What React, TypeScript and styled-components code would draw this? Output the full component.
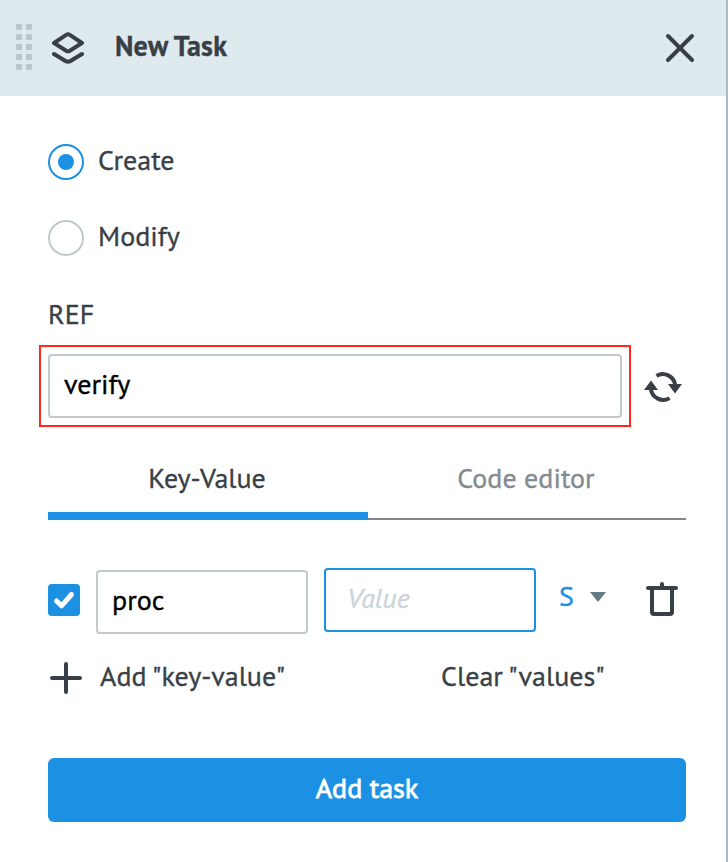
import React from "react";
import styled, { createGlobalStyle } from "styled-components";

const ink = "#393f47";
const blue = "#1c91e3";

const GlobalStyle = createGlobalStyle`
  * { box-sizing: border-box; }
  body { margin: 0; background: #fff; }
`;

const Panel = styled.main`
  width: 728px;
  height: 862px;
  border-right: 2px solid #acbcc4;
  background: #fff;
  color: ${ink};
  font-family: "PT Sans", "Open Sans", sans-serif;
  font-size: 28px;
  font-stretch: 84%;
  line-height: 36px;
  -webkit-text-stroke: 0.35px currentColor;
`;

const Header = styled.header`
  display: flex;
  align-items: center;
  height: 96px;
  padding: 0 30px 0 16px;
  background: #dfeaef;
`;

const Grip = styled.div`
  display: grid;
  grid-template-columns: 6px 6px;
  grid-auto-rows: 6px;
  gap: 4px;
  margin: 0 20px 2px 0;
`;

const GripDot = styled.i`
  border-radius: 1px;
  background: #b9c6cb;
`;

const Text = styled.span`
  white-space: nowrap;
`;

const Title = styled.h1`
  flex: 1;
  margin: 0 0 4px 31px;
  font-size: 28px;
  font-weight: 700;
  letter-spacing: 0.2px;
`;

const Icon = styled.svg`
  display: block;
  flex: none;
  fill: none;
  stroke: ${ink};
  stroke-linecap: round;
  stroke-linejoin: round;
`;

const Body = styled.section`
  padding: 48px 40px 0 48px;
`;

const Option = styled.label`
  display: flex;
  height: 36px;
  gap: 14px;
  margin-bottom: 40px;
`;

const OptionText = styled.span`
  margin-top: -2px;
`;

const Radio = styled.span<{ $on?: boolean }>`
  display: grid;
  place-items: center;
  width: 36px;
  height: 36px;
  border: 2px solid ${(p) => (p.$on ? blue : "#c1c9cd")};
  border-radius: 50%;
  &::after {
    content: "";
    width: 16px;
    height: 16px;
    border-radius: 50%;
    background: ${(p) => (p.$on ? blue : "transparent")};
  }
`;

const FieldLabel = styled.div`
  height: 36px;
`;

const RefRow = styled.div`
  display: flex;
  align-items: center;
  gap: 13px;
  margin: 13px -10px 0 -9px;
`;

const Highlight = styled.div`
  width: 592px;
  padding: 7px;
  border: 2px solid #ff2a1c;
`;

const Field = styled.div<{ $active?: boolean }>`
  height: 64px;
  padding: ${(p) => (p.$active ? "10px 21px" : "10px 14px")};
  border: 2px solid ${(p) => (p.$active ? blue : "#c1c9cd")};
  border-radius: 4px;
  background: #fff;
  color: ${(p) => (p.$active ? "#cbd4db" : "#000")};
  font-style: ${(p) => (p.$active ? "italic" : "normal")};
`;

const Tabs = styled.nav`
  display: grid;
  grid-template-columns: 320px 1fr;
  height: 60px;
  margin-top: 33px;
`;

const Tab = styled.div<{ $on?: boolean }>`
  padding-right: 2px;
  border-bottom: ${(p) => (p.$on ? `8px solid ${blue}` : "2px solid #7b8791")};
  color: ${(p) => (p.$on ? ink : "#838a90")};
  text-align: center;
`;

const PairRow = styled.div`
  display: grid;
  grid-template-columns: 32px 212px 212px 46px 32px;
  column-gap: 16px;
  height: 66px;
  margin-top: 48px;
`;

const Checkbox = styled.span`
  display: grid;
  place-items: center;
  width: 32px;
  height: 32px;
  margin-top: 16px;
  border-radius: 4px;
  background: ${blue};
`;

const KeyField = styled(Field)`
  margin-top: 2px;
`;

const TypeSelect = styled.div`
  display: flex;
  justify-content: space-between;
  width: 47px;
  margin: 10px 0 0 7px;
  color: ${blue};
`;

const Caret = styled.svg`
  width: 16px;
  height: 10px;
  margin-top: 14px;
  fill: #667a84;
`;

const Trash = styled(Icon)`
  margin: 12px 0 0 32px;
`;

const Actions = styled.div`
  display: grid;
  grid-template-columns: 52px 341px 1fr;
  height: 36px;
  margin-top: 24px;
`;

const Plus = styled(Icon)`
  margin: 4px 0 0 2px;
`;

const Submit = styled.button`
  display: block;
  width: 100%;
  height: 64px;
  margin-top: 64px;
  padding: 0 0 5px;
  border: 0;
  border-radius: 6px;
  background: ${blue};
  color: #fff;
  font: inherit;
  -webkit-text-stroke: 0.8px #fff;
`;

export default function App() {
  return (
    <Panel>
      <GlobalStyle />
      <Header>
        <Grip>
          {Array.from({ length: 10 }, (_, i) => (
            <GripDot key={i} />
          ))}
        </Grip>
        <Icon width="32" height="32" viewBox="0 0 32 32" strokeWidth="4">
          <path d="M14.2 2.8Q16 1.6 17.8 2.8L30 11L17.8 18.7Q16 19.8 14.2 18.7L2 11Z" />
          <path d="M2 22L13.5 29Q16 30.5 18.5 29L30 22" />
        </Icon>
        <Title>New Task</Title>
        <Icon width="32" height="32" viewBox="0 0 32 32" strokeWidth="4">
          <path d="M4 4L28 28M28 4L4 28" />
        </Icon>
      </Header>
      <Body>
        <Option>
          <Radio $on />
          <OptionText>Create</OptionText>
        </Option>
        <Option>
          <Radio />
          <OptionText>Modify</OptionText>
        </Option>
        <FieldLabel>REF</FieldLabel>
        <RefRow>
          <Highlight>
            <Field>verify</Field>
          </Highlight>
          <Icon width="38" height="32" viewBox="0 0 38 32" strokeWidth="4">
            <path
              strokeLinecap="butt"
              d="M12.5 5.9A12.5 12.8 0 0 1 31.2 15M25.5 28.1A12.5 12.8 0 0 1 6.8 19"
            />
            <path fill={ink} stroke="none" d="M24 14H38L31 23.5ZM0 20L7 10.5L14 20Z" />
          </Icon>
        </RefRow>
        <Tabs>
          <Tab $on>Key-Value</Tab>
          <Tab>Code editor</Tab>
        </Tabs>
        <PairRow>
          <Checkbox>
            <Icon width="32" height="32" viewBox="0 0 32 32" strokeWidth="5">
              <path stroke="#fff" d="M8.5 17L13.5 21.8L23.5 10.5" />
            </Icon>
          </Checkbox>
          <KeyField>proc</KeyField>
          <Field $active>Value</Field>
          <TypeSelect>
            <Text>S</Text>
            <Caret viewBox="0 0 16 10"><path d="M0 0H16L8 10Z" /></Caret>
          </TypeSelect>
          <Trash width="32" height="36" viewBox="0 0 32 36" strokeWidth="4">
            <path d="M2 8H30M16 4V7M6 8V32Q6 34 8 34H24Q26 34 26 32V8" />
          </Trash>
        </PairRow>
        <Actions>
          <Plus width="32" height="32" viewBox="0 0 32 32" strokeWidth="4">
            <path d="M16 2V30M2 16H30" />
          </Plus>
          <Text>Add "key-value"</Text>
          <Text>Clear "values"</Text>
        </Actions>
        <Submit>Add task</Submit>
      </Body>
    </Panel>
  );
}
